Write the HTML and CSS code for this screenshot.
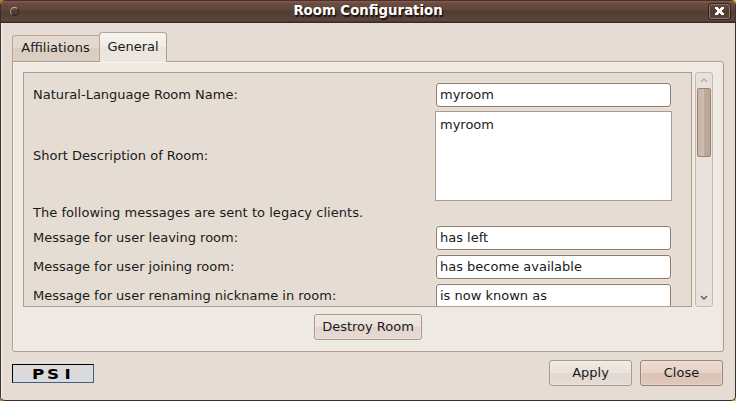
FILE: index.html
```html
<!DOCTYPE html>
<html lang="en">
<head>
<meta charset="utf-8">
<title>Room Configuration</title>
<link rel="stylesheet" href="styles.css">
</head>
<body>
<div class="window">
  <header class="titlebar">
    <span class="menu-dot"></span>
    <h1>Room Configuration</h1>
    <button class="close-x" aria-label="Close window"><svg width="9" height="8" viewBox="0 0 9 8" shape-rendering="crispEdges"><path d="M0 0h3v1h1v1h1v-1h1v-1h3v2h-1v1h-1v2h1v1h1v2h-3v-1h-1v-1h-1v1h-1v1h-3v-2h1v-1h1v-2h-1v-1h-1z"/></svg></button>
  </header>
  <main class="content">
    <nav class="tabs">
      <button class="tab">Affiliations</button>
      <button class="tab active">General</button>
    </nav>
    <section class="panel">
      <div class="scroll-area">
        <div class="form">
          <div class="row"><label>Natural-Language Room Name:</label><div class="field">myroom</div></div>
          <div class="row tall"><label>Short Description of Room:</label><div class="area">myroom</div></div>
          <p class="note">The following messages are sent to legacy clients.</p>
          <div class="row"><label>Message for user leaving room:</label><div class="field">has left</div></div>
          <div class="row"><label>Message for user joining room:</label><div class="field">has become available</div></div>
          <div class="row"><label>Message for user renaming nickname in room:</label><div class="field">is now known as</div></div>
        </div>
        <div class="scrollbar">
          <svg class="arrow up" width="8" height="5" viewBox="0 0 8 5"><path d="M1 4L4 1L7 4"/></svg>
          <div class="thumb"></div>
          <svg class="arrow down" width="8" height="5" viewBox="0 0 8 5"><path d="M1 1L4 4L7 1"/></svg>
        </div>
      </div>
      <button class="btn destroy">Destroy Room</button>
    </section>
    <footer class="footer">
      <div class="logo"><span>P</span><span>S</span><span>I</span></div>
      <button class="btn">Apply</button>
      <button class="btn close">Close</button>
    </footer>
  </main>
</div>
</body>
</html>
```
FILE: styles.css
```css
* { box-sizing: border-box; }
body {
  margin: 0;
  width: 736px;
  height: 401px;
  overflow: hidden;
  background: linear-gradient(90deg, #d17c1c 50%, #e5b93c 50%);
  font: 13px/16px "DejaVu Sans", sans-serif;
  color: #1a1a1a;
}
button { font: inherit; color: inherit; padding: 0; margin: 0; }
.window {
  height: 401px;
  border: 1px solid #3c302c;
  border-top: 0;
  border-radius: 5px;
  background: #e5ddd4;
  overflow: hidden;
}
.titlebar {
  height: 23px;
  display: grid;
  grid-template-columns: 30px 1fr 30px;
  align-items: center;
  background: linear-gradient(#4a3029 0 1px, #7d594d 1px 2px, #6d4b40 3px, #5f453a 10px, #513d33 11px, #5c453b 21px, #382a25 22px);
}
.menu-dot {
  width: 9px;
  height: 9px;
  margin: 0 0 1px 9px;
  border: 1px solid #33231d;
  border-top-color: #c5b7b0;
  border-left-color: #a8958c;
  border-radius: 50%;
}
h1 {
  margin: 0 0 2px;
  text-align: center;
  font-size: 13.3px;
  line-height: 16px;
  color: #fff;
  text-shadow: 1px 1px 1px #1d1511, 1px 2px 1px #1d1511;
}
.close-x {
  width: 23px;
  height: 17px;
  margin-left: 3px;
  display: flex;
  align-items: center;
  justify-content: center;
  background: linear-gradient(#664b40, #4e3b32 50%, #57433a);
  border: 1px solid #30221c;
  border-radius: 3px;
  box-shadow: inset 0 0 0 1px #8a756b;
}
.close-x svg { fill: #fff; margin-bottom: 1px; }
.content {
  height: 377px;
  padding: 9px 11px 0 10px;
  border-left: 1px solid #f6f2ed;
}
.tabs { height: 29px; display: flex; align-items: flex-end; }
.tab {
  width: 88px;
  height: 26px;
  border: 1px solid #bba493;
  border-right: 0;
  border-bottom: 0;
  border-radius: 3px 0 0 0;
  padding: 0 2px 2px 0;
  background: linear-gradient(#e3d9cf 50%, #d9ccc1 50%, #dccfc4);
}
.tab.active {
  width: 68px;
  height: 30px;
  margin: 0 0 -1px -1px;
  padding: 0 0 1px;
  border-right: 1px solid #b09c8b;
  border-radius: 3px 3px 0 0;
  background: linear-gradient(#f7f4f0, #efebe5 50%, #ebe3dd 50%, #eee8e2);
  position: relative;
}
.panel {
  height: 291px;
  padding: 10px;
  border: 1px solid #b09c8b;
  border-radius: 0 3px 3px 3px;
  box-shadow: inset 1px 1px #f7f4f0;
  background: #eee9e3;
  display: flex;
  flex-direction: column;
}
.scroll-area { display: flex; gap: 3px; height: 235px; }
.form {
  width: 669px;
  padding: 10px 19px 0 9px;
  border: 1px solid #b09c8b;
  background: #e5ddd4;
  overflow: hidden;
}
.row { display: flex; align-items: center; justify-content: space-between; height: 24px; margin-bottom: 5px; }
.row.tall { height: 90px; margin-top: 4px; margin-bottom: 4px; }
.row:first-child { margin-bottom: 0; }
.field {
  width: 235px;
  height: 24px;
  margin-right: 1px;
  padding: 3px;
  border: 1px solid #8f796a;
  border-radius: 3px;
  background: #fff;
  box-shadow: 0 0 0 1px #ebe4dd;
}
.area { width: 237px; height: 90px; padding: 5px 4px; border: 1px solid #ac9a8b; background: #fff; }
.note { height: 16px; margin: 0 0 5px; letter-spacing: .04px; }
.scrollbar {
  width: 18px;
  height: 235px;
  padding: 5px 1px;
  border: 1px solid #cbb9aa;
  border-radius: 3px;
  background: #e9e2dc;
  display: flex;
  flex-direction: column;
  align-items: center;
}
.arrow { fill: none; stroke: #555; stroke-width: 1.3; }
.arrow.up { stroke: #bdaea2; }
.arrow.down { margin-top: auto; margin-bottom: 1px; }
.thumb {
  width: 14px;
  height: 69px;
  margin-top: 5px;
  flex: none;
  border: 1px solid #998374;
  border-radius: 2px;
  background: linear-gradient(90deg, #c5b4a6, #cfbfb3 50%, #bca99a 50%, #b8a697);
}
.btn {
  width: 83px;
  height: 26px;
  padding-bottom: 1px;
  border: 1px solid #ac998b;
  border-radius: 3px;
  background: linear-gradient(#f0ebe7, #e9e1db 50%, #e2d8d0 50%, #e5dcd5);
  box-shadow: inset 0 0 0 1px #ffffff33;
}
.destroy { width: 108px; margin: 7px 0 0 291px; background: linear-gradient(#f0e8e4, #eae1dc 50%, #e2d4cc 50%, #e6dbd3); }
.close { border-color: #9c8576; background: linear-gradient(#ecdcd2, #e5d1c6 50%, #dbc3b6 50%, #dfc8bc); }
.footer { display: flex; gap: 8px; margin: 8px 1px 0 0; }
.logo {
  width: 82px;
  height: 19px;
  margin: 4px auto 0 0;
  border: 1px solid #000;
  border-right-color: #426084;
  border-bottom-color: #426084;
  background: #dadada;
  display: grid;
  grid-template-columns: 14px 16px 14px;
  justify-items: center;
  padding: 1px 0 0 18px;
  font: bold 14px/17px "DejaVu Sans", sans-serif;
  color: #000;
}
.logo span { transform: scaleX(1.2); }
```
